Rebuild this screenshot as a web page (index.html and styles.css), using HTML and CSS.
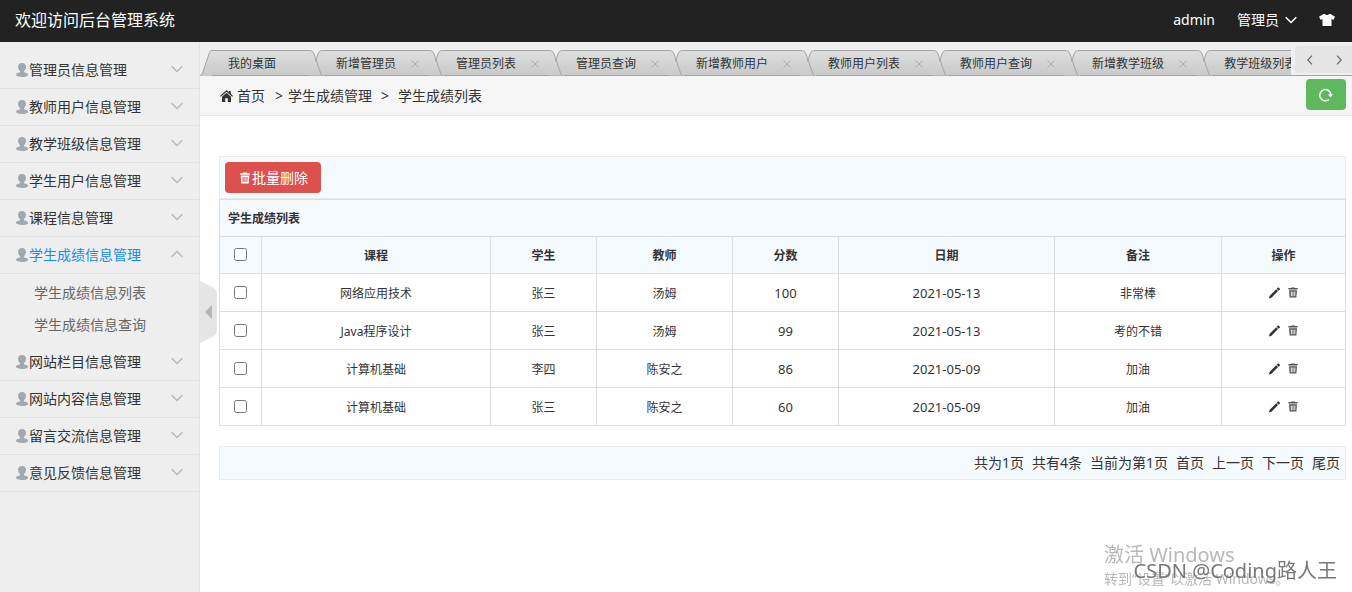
FILE: index.html
```html
<!DOCTYPE html>
<html lang="zh-CN">
<head>
<meta charset="utf-8">
<title>欢迎访问后台管理系统</title>
<link rel="stylesheet" href="styles.css">
</head>
<body>
<svg class="defs" width="0" height="0" aria-hidden="true">
  <defs>
    <linearGradient id="tabfill" x1="0" y1="0" x2="0" y2="26" gradientUnits="userSpaceOnUse">
      <stop offset="0" stop-color="#dedfdf"/><stop offset="1" stop-color="#c9c9ca"/>
    </linearGradient>
    <symbol id="user" viewBox="0 0 12 14"><path d="M6 0C8.400 0 10 1.600 10 3.800 10 5.600 9.200 7.200 8 8v1.300l3 1c.8.400 1.200 1 1.200 2C10.500 13.500 8.500 14 6 14S1.500 13.500 0 12.300c0-1 .4-1.600 1.200-2l2.800-1V8C2.800 7.200 2 5.600 2 3.800 2 1.600 3.600 0 6 0z"/></symbol>
    <symbol id="down" viewBox="0 0 12 8"><path d="M.7 1.200 6 6.500l5.300-5.300"/></symbol>
    <symbol id="up" viewBox="0 0 12 8"><path d="M.7 6.800 6 1.500l5.300 5.300"/></symbol>
    <symbol id="close" viewBox="0 0 8 8"><path d="m.5.500 7 7m0-7-7 7"/></symbol>
    <symbol id="join" viewBox="0 0 16 26">
      <path fill="url(#tabfill)" d="M0 .5C3.500.5 5 1 6 4L13.500 25.500H0zM7.500 11.500 10 4C11 1 12.500.5 16 .5V26H13.500z"/>
      <path fill="none" stroke="#a3a3a3" d="M0 .5C3.500.5 5 1 6 4l6.200 18c.8 2.500 1.300 3.500 2.800 3.500M7.500 11.500 10 4C11 1 12.500.5 16 .5"/>
    </symbol>
    <symbol id="pencil" viewBox="0 0 12 12"><path d="M0 12l.6-2.800L7.900 2l1.900 1.900L2.700 11.300zM8.400 1.400 9.600.2c.4-.3.800-.2 1.100 0l1 1c.3.400.3.800 0 1.200l-1.200 1.200z"/></symbol>
    <symbol id="bin" viewBox="0 0 10 12"><path fill-rule="evenodd" d="M3 1.200V.5h4v.7h3v1.600H0V1.200zM.7 3.500h8.600L8.700 11.500H1.300zM2.500 5l.2 5h1l-.1-5zm2 0v5h1V5zm2 0-.1 5h1l.2-5z"/></symbol>
  </defs>
</svg>

<header class="topbar">
  <h1 class="brand">欢迎访问后台管理系统</h1>
  <nav class="account">
    <a href="#">admin</a>
    <button class="plain role" type="button">管理员<svg class="chevron" width="12" height="8"><use href="#down"/></svg></button>
    <button class="plain" type="button" aria-label="换肤"><svg class="shirt" width="16" height="12" viewBox="0 0 16 12"><path d="M4.500 0H6c.5 1.300 3.500 1.300 4 0h1.500L16 2.800 14.300 6 12.500 5V12h-9V5L1.700 6 0 2.800z"/></svg></button>
  </nav>
</header>

<div class="shell">
  <aside class="side">
    <nav class="menu">
      <button class="menu-item" type="button"><svg class="user" width="12" height="14"><use href="#user"/></svg><span>管理员信息管理</span><svg class="chevron" width="12" height="8"><use href="#down"/></svg></button>
      <button class="menu-item" type="button"><svg class="user" width="12" height="14"><use href="#user"/></svg><span>教师用户信息管理</span><svg class="chevron" width="12" height="8"><use href="#down"/></svg></button>
      <button class="menu-item" type="button"><svg class="user" width="12" height="14"><use href="#user"/></svg><span>教学班级信息管理</span><svg class="chevron" width="12" height="8"><use href="#down"/></svg></button>
      <button class="menu-item" type="button"><svg class="user" width="12" height="14"><use href="#user"/></svg><span>学生用户信息管理</span><svg class="chevron" width="12" height="8"><use href="#down"/></svg></button>
      <button class="menu-item" type="button"><svg class="user" width="12" height="14"><use href="#user"/></svg><span>课程信息管理</span><svg class="chevron" width="12" height="8"><use href="#down"/></svg></button>
      <button class="menu-item active" type="button" aria-expanded="true"><svg class="user" width="12" height="14"><use href="#user"/></svg><span>学生成绩信息管理</span><svg class="chevron" width="12" height="8"><use href="#up"/></svg></button>
      <div class="submenu"><a href="#">学生成绩信息列表</a><a href="#">学生成绩信息查询</a></div>
      <button class="menu-item" type="button"><svg class="user" width="12" height="14"><use href="#user"/></svg><span>网站栏目信息管理</span><svg class="chevron" width="12" height="8"><use href="#down"/></svg></button>
      <button class="menu-item" type="button"><svg class="user" width="12" height="14"><use href="#user"/></svg><span>网站内容信息管理</span><svg class="chevron" width="12" height="8"><use href="#down"/></svg></button>
      <button class="menu-item" type="button"><svg class="user" width="12" height="14"><use href="#user"/></svg><span>留言交流信息管理</span><svg class="chevron" width="12" height="8"><use href="#down"/></svg></button>
      <button class="menu-item" type="button"><svg class="user" width="12" height="14"><use href="#user"/></svg><span>意见反馈信息管理</span><svg class="chevron" width="12" height="8"><use href="#down"/></svg></button>
    </nav>
    <button class="plain fold" type="button" aria-label="收起菜单"><svg width="17" height="62" viewBox="0 0 17 62"><path fill="#e5e5e5" d="M0 0 14 7q3 2 3 5v38q0 3-3 5L0 62z"/><path fill="#b5b5b5" d="M12 24v14l-7-7z"/></svg></button>
  </aside>

  <main class="main">
    <div class="tabbar">
      <div class="tabs">
        <svg class="edge" width="12" height="26" viewBox="0 0 12 26"><path fill="url(#tabfill)" d="M1 26 9 4C10 1 10.500.5 12 .5V26z"/><path fill="none" stroke="#a3a3a3" d="M0 25.500C2 25.500 2.500 23 3 21.500L9 4C10 1 10.500.5 12 .5"/></svg>
        <div class="tab home"><a href="#">我的桌面</a></div>
        <svg class="edge" width="16" height="26"><use href="#join"/></svg>
        <div class="tab"><a href="#">新增管理员</a><button class="plain close" type="button" aria-label="关闭"><svg width="8" height="8"><use href="#close"/></svg></button></div>
        <svg class="edge" width="16" height="26"><use href="#join"/></svg>
        <div class="tab"><a href="#">管理员列表</a><button class="plain close" type="button" aria-label="关闭"><svg width="8" height="8"><use href="#close"/></svg></button></div>
        <svg class="edge" width="16" height="26"><use href="#join"/></svg>
        <div class="tab"><a href="#">管理员查询</a><button class="plain close" type="button" aria-label="关闭"><svg width="8" height="8"><use href="#close"/></svg></button></div>
        <svg class="edge" width="16" height="26"><use href="#join"/></svg>
        <div class="tab"><a href="#">新增教师用户</a><button class="plain close" type="button" aria-label="关闭"><svg width="8" height="8"><use href="#close"/></svg></button></div>
        <svg class="edge" width="16" height="26"><use href="#join"/></svg>
        <div class="tab"><a href="#">教师用户列表</a><button class="plain close" type="button" aria-label="关闭"><svg width="8" height="8"><use href="#close"/></svg></button></div>
        <svg class="edge" width="16" height="26"><use href="#join"/></svg>
        <div class="tab"><a href="#">教师用户查询</a><button class="plain close" type="button" aria-label="关闭"><svg width="8" height="8"><use href="#close"/></svg></button></div>
        <svg class="edge" width="16" height="26"><use href="#join"/></svg>
        <div class="tab"><a href="#">新增教学班级</a><button class="plain close" type="button" aria-label="关闭"><svg width="8" height="8"><use href="#close"/></svg></button></div>
        <svg class="edge" width="16" height="26"><use href="#join"/></svg>
        <div class="tab"><a href="#">教学班级列表</a><button class="plain close" type="button" aria-label="关闭"><svg width="8" height="8"><use href="#close"/></svg></button></div>
      </div>
      <div class="scroller">
        <button class="plain" type="button" aria-label="向左"><svg width="6" height="10" viewBox="0 0 6 10"><path d="M5 .7.800 5 5 9.300"/></svg></button>
        <button class="plain" type="button" aria-label="向右"><svg width="6" height="10" viewBox="0 0 6 10"><path d="M1 .7 5.200 5 1 9.300"/></svg></button>
      </div>
    </div>

    <div class="crumbs">
      <svg width="13" height="12" viewBox="0 0 13 12"><path d="M6.500 0 9 2.200V1h1.800v2.800L13 5.900l-.8.900L6.500 1.700.800 6.800 0 5.900zM6.500 2.800l4.500 4V12H7.800V8.300H5.200V12H2V6.800z"/></svg>
      <a href="#">首页</a><span class="sep">&gt;</span><a href="#">学生成绩管理</a><span class="sep wide">&gt;</span><span>学生成绩列表</span>
      <button class="refresh" type="button" aria-label="刷新"><svg width="14" height="14" viewBox="0 0 14 14"><path fill="none" stroke="#fff" stroke-width="1.500" d="M9.800 11.700A5.600 5.600 0 1 1 12 6.800"/><path fill="#fff" d="M9 6.200h5l-2.400 3z"/></svg></button>
    </div>

    <div class="content">
      <div class="toolbar"><button class="delete" type="button"><svg width="14" height="12"><use href="#bin"/></svg>批量删除</button></div>
      <table class="grid">
        <colgroup><col class="c-check"><col class="c-course"><col class="c-short"><col class="c-teacher"><col class="c-short"><col class="c-date"><col class="c-note"><col class="c-act"></colgroup>
        <thead>
          <tr><th class="title" colspan="8">学生成绩列表</th></tr>
          <tr><th class="pick"><input type="checkbox" aria-label="全选"></th><th>课程</th><th>学生</th><th>教师</th><th>分数</th><th>日期</th><th>备注</th><th>操作</th></tr>
        </thead>
        <tbody>
          <tr><td class="pick"><input type="checkbox" aria-label="选择第1行"></td><td>网络应用技术</td><td>张三</td><td>汤姆</td><td class="num">100</td><td class="num">2021-05-13</td><td>非常棒</td><td class="pick"><div class="acts"><a href="#" aria-label="编辑"><svg width="11" height="12"><use href="#pencil"/></svg></a><a href="#" aria-label="删除"><svg class="bin" width="10" height="11"><use href="#bin"/></svg></a></div></td></tr>
          <tr><td class="pick"><input type="checkbox" aria-label="选择第2行"></td><td>Java程序设计</td><td>张三</td><td>汤姆</td><td class="num">99</td><td class="num">2021-05-13</td><td>考的不错</td><td class="pick"><div class="acts"><a href="#" aria-label="编辑"><svg width="11" height="12"><use href="#pencil"/></svg></a><a href="#" aria-label="删除"><svg class="bin" width="10" height="11"><use href="#bin"/></svg></a></div></td></tr>
          <tr><td class="pick"><input type="checkbox" aria-label="选择第3行"></td><td>计算机基础</td><td>李四</td><td>陈安之</td><td class="num">86</td><td class="num">2021-05-09</td><td>加油</td><td class="pick"><div class="acts"><a href="#" aria-label="编辑"><svg width="11" height="12"><use href="#pencil"/></svg></a><a href="#" aria-label="删除"><svg class="bin" width="10" height="11"><use href="#bin"/></svg></a></div></td></tr>
          <tr><td class="pick"><input type="checkbox" aria-label="选择第4行"></td><td>计算机基础</td><td>张三</td><td>陈安之</td><td class="num">60</td><td class="num">2021-05-09</td><td>加油</td><td class="pick"><div class="acts"><a href="#" aria-label="编辑"><svg width="11" height="12"><use href="#pencil"/></svg></a><a href="#" aria-label="删除"><svg class="bin" width="10" height="11"><use href="#bin"/></svg></a></div></td></tr>
        </tbody>
      </table>
      <div class="pager"><span>共为1页</span><span>共有4条</span><span>当前为第1页</span><a href="#">首页</a><a href="#">上一页</a><a href="#">下一页</a><a href="#">尾页</a></div>
    </div>
  </main>
</div>

<div class="activate"><p class="activate-title">激活 Windows</p><p>转到“设置”以激活 Windows。</p></div>
<div class="credit">CSDN @Coding路人王</div>
</body>
</html>
```
FILE: styles.css
```css
* { box-sizing: border-box; }
body {
  margin: 0;
  min-height: 100vh;
  display: flex;
  flex-direction: column;
  background: #fff;
  color: #333;
  font: 14px/20px "Noto Sans", "Noto Sans CJK SC", sans-serif;
}
a { color: inherit; text-decoration: none; }
button { font: inherit; color: inherit; cursor: pointer; }
svg { display: block; flex: none; }
.defs { position: absolute; }
.plain { border: 0; padding: 0; background: none; }
.chevron { fill: none; stroke: currentColor; stroke-width: 1.5; }

.topbar {
  display: flex;
  align-items: center;
  justify-content: space-between;
  height: 42px;
  padding: 0 17px 2px 15px;
  background: #222;
  color: #fff;
}
.brand { margin: 0; font-size: 16px; font-weight: 400; }
.account { display: flex; align-items: center; gap: 22px; }
.role { display: flex; align-items: center; gap: 6px; }
.shirt { fill: #fff; }

.shell { flex: 1; display: flex; }
.side {
  position: relative;
  flex: none;
  width: 200px;
  padding-top: 10px;
  background: #eee;
  border-right: 1px solid #e2e2e2;
}
.menu { display: flex; flex-direction: column; }
.menu-item {
  display: flex;
  align-items: center;
  height: 37px;
  padding: 0 16px;
  border: 0;
  border-bottom: 1px solid #e2e2e2;
  background: none;
  text-align: left;
}
.menu-item span { flex: 1; padding-left: 1px; }
.menu-item .chevron { margin-bottom: 2px; color: #b8b8b8; }
.user { fill: #a2a8b0; }
.active { color: #148cf1; }
.submenu { display: flex; flex-direction: column; padding: 3px 0 3px 34px; color: #666; }
.submenu a { line-height: 32px; }
.fold { position: absolute; left: 200px; top: 239px; }

.main { flex: 1; min-width: 0; }
.tabbar {
  display: flex;
  height: 34px;
  background: linear-gradient(#a3a3a3, #a3a3a3) bottom / 100% 1px no-repeat #efeff1;
}
.tabs { flex: 1; min-width: 0; display: flex; align-items: flex-end; overflow: hidden; font-size: 12px; }
.edge { height: 26px; }
.tab {
  flex: none;
  display: flex;
  align-items: center;
  gap: 15px;
  height: 26px;
  padding: 2px 9px 0 12px;
  border: solid #a3a3a3;
  border-width: 1px 0;
  background: linear-gradient(#dedfdf, #c9c9ca);
  white-space: nowrap;
}
.home { padding: 2px 32px 0 16px; }
.close { color: #a8adb3; stroke: currentColor; }
.scroller {
  flex: none;
  display: flex;
  align-items: center;
  justify-content: space-between;
  width: 57px;
  height: 27px;
  margin: 4px 0 0 4px;
  padding: 0 10px 0 12px;
  border-radius: 3px 0 0 3px;
  background: #e5e5e5;
}
.scroller svg { fill: none; stroke: #666; stroke-width: 1.2; }

.crumbs {
  display: flex;
  align-items: center;
  height: 40px;
  padding: 0 6px 0 20px;
  background: #f5f5f5;
  border-bottom: 1px solid #e5e5e5;
}
.crumbs > svg { margin-right: 4px; fill: #333; }
.sep { padding: 0 5px 0 10px; }
.wide { padding: 0 9px; }
.refresh, .delete {
  display: flex;
  align-items: center;
  justify-content: center;
  height: 31px;
  border: 0;
  border-radius: 4px;
  color: #fff;
}
.refresh { width: 40px; margin: 0 0 2px auto; padding: 0; background: #5eb95e; }
.delete { padding: 0 13px; background: #dd514c; }
.delete svg { fill: #fff; }

.content { padding: 40px 6px 0 19px; }
.toolbar { padding: 5px; border: 1px solid #ebebeb; background: #f5fafe; }
.grid { width: 100%; table-layout: fixed; border-collapse: collapse; font-size: 12px; text-align: center; }
.grid th, .grid td { height: 38px; padding: 2px 8px 0; border: 1px solid #ddd; }
.grid th { height: 37px; background: #f5fafe; }
.grid .title { text-align: left; }
.grid .pick, .grid .num { padding: 0 8px; }
.grid th.pick { padding-bottom: 1px; }
.grid input { display: block; width: 13px; height: 13px; margin: 0 auto; }
.num { font-size: 13px; }
.c-check { width: 42px; }
.c-course { width: 229px; }
.c-short { width: 106px; }
.c-teacher { width: 136px; }
.c-date { width: 216px; }
.c-note { width: 167px; }
.c-act { width: 124px; }
.acts { display: flex; justify-content: center; gap: 8px; fill: #333; }
.bin { fill: #555; }
.pager {
  display: flex;
  justify-content: flex-end;
  gap: 8px;
  margin-top: 20px;
  padding: 6px 5px;
  border: 1px solid #ebebeb;
  background: #f5fafe;
}

.activate { position: fixed; right: 51px; bottom: 3px; width: 197px; color: #b8b8b8; white-space: nowrap; }
.activate p { margin: 0; }
.activate .activate-title { font-size: 20px; line-height: 28px; }
.credit { position: fixed; right: 15px; bottom: 6px; color: #777; font-size: 20px; line-height: 30px; }
```
